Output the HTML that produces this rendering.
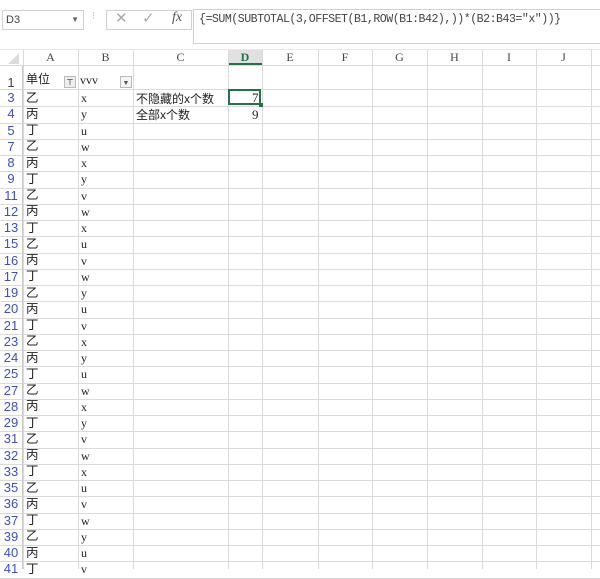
<!DOCTYPE html>
<html><head><meta charset="utf-8"><style>
body{margin:0;width:600px;height:569px;overflow:hidden;background:#fff;font-family:"Liberation Serif","Noto Serif CJK SC",serif;position:relative}
.a{position:absolute}
.vl{position:absolute;width:1px;background:#dadada}
.hl{position:absolute;height:1px;background:#dadada;left:0;width:600px}
.t{position:absolute;font-size:12px;color:#222;white-space:nowrap;line-height:16px;height:16px}
.cj{font-family:"Liberation Sans","Noto Sans CJK SC",sans-serif}
.rn{position:absolute;width:22px;text-align:center;font-size:13px;color:#3c4fc7;font-family:"Liberation Sans",sans-serif;line-height:16px}
.ch{position:absolute;top:50px;height:15px;text-align:center;font-size:12px;color:#444;line-height:15px}
</style></head><body>
<div class="a" style="left:2px;top:10px;width:80px;height:18px;border:1px solid #d0d0d0;font-size:11px;line-height:18px;color:#444;font-family:'Liberation Sans',sans-serif">&nbsp;D3<span style="position:absolute;right:4px;font-size:8px;color:#666">▼</span></div>
<div class="a" style="left:92px;top:11px;color:#bbb;font-size:10px">⁝</div>
<div class="a" style="left:106px;top:10px;width:84px;height:18px;border:1px solid #d0d0d0"></div>
<div class="a" style="left:115px;top:9px;color:#aaa;font-size:15px;font-family:'Liberation Sans'">✕</div>
<div class="a" style="left:142px;top:9px;color:#aaa;font-size:15px;font-family:'Liberation Sans'">✓</div>
<div class="a" style="left:172px;top:10px;color:#555;font-size:14px;font-style:italic">fx</div>
<div class="a" style="left:193px;top:9px;width:410px;height:33px;border:1px solid #d0d0d0"></div>
<div class="a" style="left:199px;top:13px;font-size:11.6px;color:#444;font-family:'Liberation Mono',monospace;letter-spacing:-0.5px;white-space:nowrap">{=SUM(SUBTOTAL(3,OFFSET(B1,ROW(B1:B42),))*(B2:B43="x"))}</div>
<div class="a" style="left:228px;top:50px;width:34px;height:15px;background:#e1e1e1;border-bottom:2px solid #217346;box-sizing:border-box"></div>
<div class="a" style="left:8px;top:53px;width:0;height:0;border-left:11px solid transparent;border-bottom:11px solid #dcdcdc"></div>
<div id="g"></div>
<div class="a" style="left:228px;top:89px;width:33px;height:16px;border:2px solid #217346;box-sizing:border-box"></div>
<div class="a" style="left:259px;top:103px;width:4px;height:4px;background:#217346"></div>
<div class="t cj" style="left:26px;top:71px;font-size:12px">单位</div>
<div class="a" style="left:64px;top:76px;width:12px;height:12px;border:1px solid #bbb;background:#eee;font-size:8px;text-align:center;line-height:12px;box-sizing:border-box">⊤</div>
<div class="t" style="left:80px;top:72px">vvv</div>
<div class="a" style="left:120px;top:76px;width:12px;height:12px;border:1px solid #bbb;background:#f4f4f4;font-size:7px;text-align:center;line-height:12px;box-sizing:border-box;color:#555">▼</div>
<div class="t cj" style="left:136px;top:91px">不隐藏的x个数</div>
<div class="t cj" style="left:136px;top:107px">全部x个数</div>
<div class="t" style="left:252px;top:90px;font-size:13px">7</div>
<div class="t" style="left:252px;top:107px;font-size:13px">9</div>
<script>
var g=document.getElementById('g'),h='';
var xs=[23,78,133,228,262,318,372,427,482,536,591];
var L=['A','B','C','D','E','F','G','H','I','J'];
for(var i=0;i<10;i++){h+='<div class="ch" style="left:'+xs[i]+'px;width:'+(xs[i+1]-xs[i])+'px;'+(i==3?'color:#217346;font-weight:bold':'')+'">'+L[i]+'</div>';}
xs.forEach(function(x){h+='<div class="vl" style="left:'+x+'px;top:50px;height:519px"></div>'});
h+='<div class="hl" style="top:65px"></div><div class="hl" style="top:49px;background:#e6e6e6"></div>';
h+='<div class="rn" style="top:75px;color:#444">1</div><div class="hl" style="top:89px"></div>';
var rows=[3,4,5,7,8,9,11,12,13,15,16,17,19,20,21,23,24,25,27,28,29,31,32,33,35,36,37,39,40,41];
var A=['乙','丙','丁'];
var B='xyuwxyvwxuvwyuvxyuwxyvwxuvwyuv'.split('');
for(var k=0;k<rows.length;k++){var y=90+k*16.25;
h+='<div class="rn" style="top:'+y+'px">'+rows[k]+'</div>';
h+='<div class="t cj" style="left:26px;top:'+(y-0.5)+'px;font-size:12.5px">'+A[k%3]+'</div>';
h+='<div class="t" style="left:81px;top:'+y+'px">'+B[k]+'</div>';
h+='<div class="hl" style="top:'+Math.round(y+16.25)+'px"></div>';}
h+='<div class="a" style="left:22px;top:66px;width:1px;height:503px;background:#c8c8c8"></div>';
g.innerHTML=h;
</script>
</body></html>
